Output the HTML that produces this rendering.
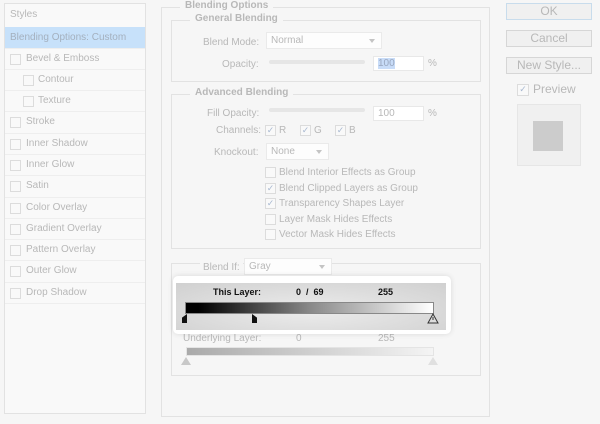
<!DOCTYPE html><html><head><style>
*{margin:0;padding:0;box-sizing:border-box}
body{width:600px;height:424px;background:#f6f6f6;position:relative;overflow:hidden;font-family:"Liberation Sans",sans-serif;font-size:10px;color:#b8b8b8}
.a{position:absolute;white-space:nowrap}
.box{position:absolute;border:1px solid #e2e2e2}
.t{position:absolute;background:#f6f6f6;padding:0 5px;font-weight:bold;font-size:10px;color:#b8b8b8}
.cb{position:absolute;width:11px;height:11px;border:1px solid #dcdcdc;background:#f9f9f9;font-size:9px;line-height:9px;text-align:center;color:#a8b8d0}
.row{position:absolute;left:5px;width:140px;height:21px;border-top:1px solid #eeeeee;line-height:20px}
.sel{position:absolute;background:#fdfdfd;border:1px solid #eaeaea;height:17px;line-height:15px;padding-left:4px}
.sel:after{content:"";position:absolute;right:6px;top:6px;border:3.5px solid transparent;border-top:4px solid #c4c4c4}
.btn{position:absolute;left:506px;width:86px;height:17px;border:1px solid #d6d6d6;background:#f0f0f0;text-align:center;line-height:15px;font-size:12px;color:#b8b8b8}
.sl{position:absolute;height:4px;background:#e6e6e6;border-radius:2px}
.inp{position:absolute;background:#fff;border:1px solid #e8e8e8;height:15px;line-height:13px;padding-left:4px}
</style></head><body>
<div class="box" style="left:4px;top:3px;width:142px;height:411px;background:#f9f9f9"></div>
<div class="a" style="left:10px;top:9px">Styles</div>
<div class="a" style="left:5px;top:27px;width:140px;height:21px;background:#c7e1fa;line-height:21px;padding-left:5px;color:#a4b0be">Blending Options: Custom</div>
<div class="row" style="top:48px"><span class="cb" style="left:5px;top:5px"></span><span class="a" style="left:21px">Bevel &amp; Emboss</span></div>
<div class="row" style="top:69px"><span class="cb" style="left:18px;top:5px"></span><span class="a" style="left:33px">Contour</span></div>
<div class="row" style="top:90px"><span class="cb" style="left:18px;top:5px"></span><span class="a" style="left:33px">Texture</span></div>
<div class="row" style="top:111px"><span class="cb" style="left:5px;top:5px"></span><span class="a" style="left:21px">Stroke</span></div>
<div class="row" style="top:133px"><span class="cb" style="left:5px;top:5px"></span><span class="a" style="left:21px">Inner Shadow</span></div>
<div class="row" style="top:154px"><span class="cb" style="left:5px;top:5px"></span><span class="a" style="left:21px">Inner Glow</span></div>
<div class="row" style="top:175px"><span class="cb" style="left:5px;top:5px"></span><span class="a" style="left:21px">Satin</span></div>
<div class="row" style="top:197px"><span class="cb" style="left:5px;top:5px"></span><span class="a" style="left:21px">Color Overlay</span></div>
<div class="row" style="top:218px"><span class="cb" style="left:5px;top:5px"></span><span class="a" style="left:21px">Gradient Overlay</span></div>
<div class="row" style="top:239px"><span class="cb" style="left:5px;top:5px"></span><span class="a" style="left:21px">Pattern Overlay</span></div>
<div class="row" style="top:260px"><span class="cb" style="left:5px;top:5px"></span><span class="a" style="left:21px">Outer Glow</span></div>
<div class="row" style="top:282px"><span class="cb" style="left:5px;top:5px"></span><span class="a" style="left:21px">Drop Shadow</span></div>
<div class="row" style="top:303px;height:1px"></div>

<div class="box" style="left:161px;top:7px;width:329px;height:410px"></div>
<div class="t" style="left:180px;top:0px">Blending Options</div>
<div class="box" style="left:171px;top:20px;width:310px;height:62px"></div>
<div class="t" style="left:190px;top:13px">General Blending</div>
<div class="a" style="left:203px;top:37px">Blend Mode:</div>
<div class="sel" style="left:266px;top:32px;width:116px">Normal</div>
<div class="a" style="left:222px;top:59px">Opacity:</div>
<div class="sl" style="left:269px;top:60px;width:96px"></div>
<div class="inp" style="left:373px;top:56px;width:51px"><span style="background:#c8dcf8;color:#9aa8c0">100</span></div>
<div class="a" style="left:428px;top:58px">%</div>

<div class="box" style="left:171px;top:94px;width:310px;height:155px"></div>
<div class="t" style="left:190px;top:87px">Advanced Blending</div>
<div class="a" style="left:207px;top:108px">Fill Opacity:</div>
<div class="sl" style="left:269px;top:108px;width:96px"></div>
<div class="inp" style="left:373px;top:106px;width:51px">100</div>
<div class="a" style="left:428px;top:108px">%</div>
<div class="a" style="left:216px;top:125px">Channels:</div>
<span class="cb" style="left:265px;top:125px">✓</span><span class="a" style="left:279px;top:125px">R</span>
<span class="cb" style="left:300px;top:125px">✓</span><span class="a" style="left:314px;top:125px">G</span>
<span class="cb" style="left:335px;top:125px">✓</span><span class="a" style="left:349px;top:125px">B</span>
<div class="a" style="left:214px;top:147px">Knockout:</div>
<div class="sel" style="left:266px;top:143px;width:63px">None</div>
<span class="cb" style="left:265px;top:167px"></span><span class="a" style="left:279px;top:167px">Blend Interior Effects as Group</span>
<span class="cb" style="left:265px;top:183px">✓</span><span class="a" style="left:279px;top:183px">Blend Clipped Layers as Group</span>
<span class="cb" style="left:265px;top:198px">✓</span><span class="a" style="left:279px;top:198px">Transparency Shapes Layer</span>
<span class="cb" style="left:265px;top:214px"></span><span class="a" style="left:279px;top:214px">Layer Mask Hides Effects</span>
<span class="cb" style="left:265px;top:229px"></span><span class="a" style="left:279px;top:229px">Vector Mask Hides Effects</span>

<div class="box" style="left:171px;top:263px;width:310px;height:113px"></div>
<div class="a" style="left:200px;top:262px;background:#f6f6f6;padding:0 3px">Blend If:</div>
<div class="sel" style="left:244px;top:258px;width:88px">Gray</div>
<div class="a" style="left:183px;top:333px">Underlying Layer:</div>
<div class="a" style="left:296px;top:333px">0</div>
<div class="a" style="left:378px;top:333px">255</div>
<div class="a" style="left:186px;top:347px;width:248px;height:9px;background:linear-gradient(90deg,#aaa,#f4f4f4);border:1px solid #e4e4e4"></div>
<div class="a" style="left:181px;top:357px;width:0;height:0;border:5px solid transparent;border-bottom:8px solid #c8c8c8;border-top:0"></div>
<div class="a" style="left:428px;top:357px;width:0;height:0;border:5px solid transparent;border-bottom:8px solid #e0e0e0;border-top:0"></div>

<div class="a" style="left:173px;top:276px;width:278px;height:58px;background:#fff;border-radius:5px;box-shadow:0 0 6px rgba(0,0,0,.12)"></div>
<div class="a" style="left:176px;top:283px;width:270px;height:47px;background:radial-gradient(ellipse at 50% 60%,#ececec,#d0d0d0)"></div>
<div class="a" style="left:213px;top:287px;color:#111;font-weight:bold;font-size:9px">This Layer:</div>
<div class="a" style="left:296px;top:287px;color:#111;font-weight:bold;font-size:9px">0 &nbsp;/ &nbsp;69</div>
<div class="a" style="left:378px;top:287px;color:#111;font-weight:bold;font-size:9px">255</div>
<div class="a" style="left:185px;top:302px;width:249px;height:12px;border:1px solid #888;background:linear-gradient(90deg,#000,#000 5%,#888 50%,#fff)"></div>
<div class="a" style="left:182px;top:314px;width:5px;height:9px;background:#111;clip-path:polygon(100% 0,100% 100%,0 100%,0 40%)"></div>
<div class="a" style="left:252px;top:314px;width:5px;height:9px;background:#111;clip-path:polygon(0 0,100% 40%,100% 100%,0 100%)"></div>
<svg class="a" style="left:427px;top:313px" width="12" height="11"><path d="M6 1L11 10H1Z" fill="#ddd" stroke="#333"/><path d="M6 4v3" stroke="#333"/></svg>

<div class="btn" style="top:3px;border-color:#c8dcec">OK</div>
<div class="btn" style="top:30px">Cancel</div>
<div class="btn" style="top:57px">New Style...</div>
<span class="cb" style="left:517px;top:84px;width:12px;height:12px">✓</span>
<div class="a" style="left:533px;top:82px;font-size:12px">Preview</div>
<div class="a" style="left:517px;top:104px;width:64px;height:62px;background:#f0f0f0;border:1px solid #e6e6e6"></div>
<div class="a" style="left:533px;top:121px;width:30px;height:30px;background:#cccccc"></div>
</body></html>
